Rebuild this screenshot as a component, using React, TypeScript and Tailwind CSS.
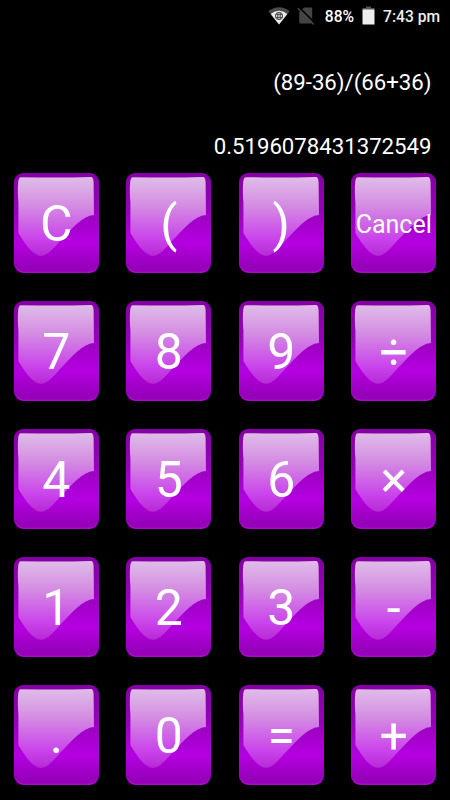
const rows = [
    ["C", "(", ")", "Cancel"],
    ["7", "8", "9", "÷"],
    ["4", "5", "6", "×"],
    ["1", "2", "3", "-"],
    [".", "0", "=", "+"],
]

const Wifi = () => {
    return (
        <svg className="w-[22px] h-[18px]" viewBox="0 0 22 18">
            <path d="M0.3 4.3Q11 -3.9 21.7 4.3L11 17.4Z" fill="#4a4a4a" />
            <path d="M2.7 7.1Q11 0.6 19.3 7.1L11 17.4Z" fill="#ececec" />
            <g fill="none" stroke="#3c3c3c" strokeWidth="0.9">
                <circle cx="11" cy="9" r="3.6" />
                <path d="M7.5 7.6h7M7.5 10.4h7M9.8 5.5v7M12.2 5.5v7" />
            </g>
        </svg>
    )
}

const NoSim = () => {
    return (
        <svg className="w-[18px] h-[18px]" viewBox="0 0 18 18">
            <path d="M7 0.6H14Q15.2 0.6 15.2 2V15Q15.2 16.4 14 16.4H3.4Q2.2 16.4 2.2 15V5.4Z" fill="#444" />
            <path d="M1.8 0L17.8 16" stroke="#000" strokeWidth="1.6" />
            <path d="M0.8 1.2L16.8 17.4" stroke="#484848" strokeWidth="1.4" />
        </svg>
    )
}

const Battery = () => {
    return (
        <svg className="w-[13px] h-[20px]" viewBox="0 0 13 20">
            <path d="M4 0.5H9V2H12.5V4H0.5V2H4Z" fill="#555" />
            <path d="M0.5 3.5H12.5V18.5H0.5Z" fill="#eee" />
        </svg>
    )
}

// glossy face shared by every key
const Face = () => {
    return (
        <svg className="absolute inset-0 w-full h-full" viewBox="0 0 85 100" preserveAspectRatio="none">
            <rect width="85" height="100" rx="9" fill="url(#base)" />
            <path d="M2.5 94.5Q5 99.2 9.5 99.2H75.5Q80 99.2 82.5 94.5" fill="none" stroke="#b50bd4" strokeWidth="1" />
            <path
                d="M7 4.2Q43 4.9 77 4Q79.2 4 79.6 9L80 42C68 43 59 55 46 68C39 76 33 82.8 27 82.8C19 82.8 11 71 4.4 60V30Q3.4 18 4.2 9Q4.6 4.2 7 4.2Z"
                fill="url(#gloss)"
            />
        </svg>
    )
}

const Key = ({ label }: { label: string }) => {
    return (
        <button className="relative w-[85px] h-[100px] flex items-center justify-center">
            <Face />
            <span className={label === "Cancel" ? "relative text-[25px] leading-none pt-0.5" : "relative text-[50px] leading-none pt-0.5"}>
                {label}
            </span>
        </button>
    )
}

const App = () => {
    return (
        <div className="w-[450px] h-[800px] overflow-hidden bg-black text-white font-[Roboto,sans-serif]">
            <svg className="absolute w-0 h-0">
                <defs>
                    <linearGradient id="base" x1="0" y1="0" x2="0" y2="1">
                        <stop offset="0" stopColor="#8500a4" />
                        <stop offset="0.35" stopColor="#9600b9" />
                        <stop offset="0.7" stopColor="#b400e1" />
                        <stop offset="0.97" stopColor="#9300b5" />
                        <stop offset="1" stopColor="#a000c4" />
                    </linearGradient>
                    <linearGradient id="gloss" x1="0" y1="0" x2="0" y2="1">
                        <stop offset="0" stopColor="#e0bce8" />
                        <stop offset="0.35" stopColor="#d48ee2" />
                        <stop offset="0.8" stopColor="#c941eb" />
                        <stop offset="1" stopColor="#b62ad5" />
                    </linearGradient>
                </defs>
            </svg>

            {/* status bar */}
            <div className="h-8 pr-[10px] flex items-center justify-end text-[#eee] text-[15.6px] font-medium">
                <Wifi />
                <div className="pl-[7px]"><NoSim /></div>
                <p className="pl-[10px] pt-[3px] text-white">88%</p>
                <div className="pl-2"><Battery /></div>
                <p className="pl-2 pt-[3px]">7:43 pm</p>
            </div>

            {/* display */}
            <div className="h-[127px] pr-[18.5px] text-right text-[22.2px]">
                <p className="h-16 pt-[37px] leading-[26px]">(89-36)/(66+36)</p>
                <p className="h-16 pt-[37px] leading-[26px]">0.5196078431372549</p>
            </div>

            {/* keypad */}
            <div className="pt-[14px] pl-[13.75px] grid grid-cols-[repeat(4,112.5px)] gap-y-7">
                {rows.flat().map((label) => (
                    <Key key={label} label={label} />
                ))}
            </div>
        </div>
    )
}

export default App
